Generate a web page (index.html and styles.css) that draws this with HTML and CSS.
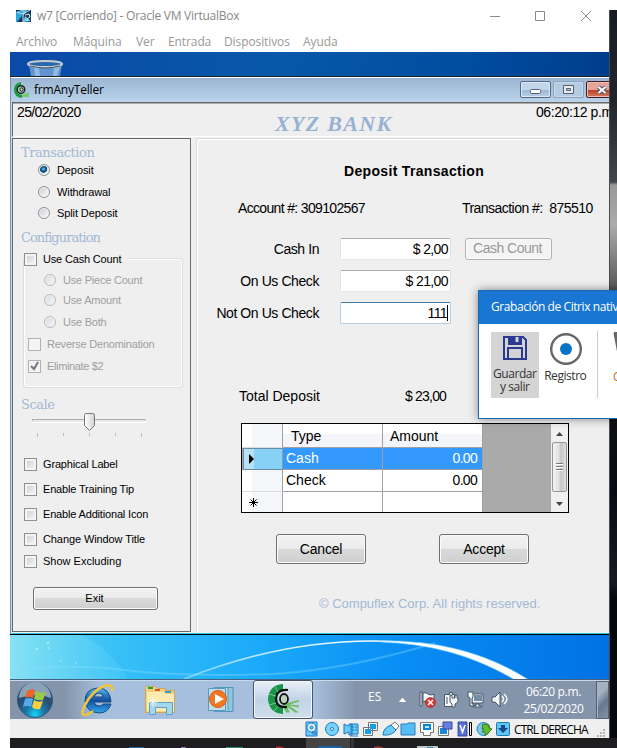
FILE: index.html
```html
<!DOCTYPE html>
<html lang="es">
<head>
<meta charset="utf-8">
<title>w7 [Corriendo] - Oracle VM VirtualBox</title>
<link rel="stylesheet" href="styles.css">
</head>
<body>
<div class="host">
  <div class="main">
    <div class="vm">
      <header class="vm-title">
        <svg width="16" height="14" viewBox="0 0 16 14"><path fill="#163a55" d="M0 1h15v12H0z"/><path fill="#2aa4df" d="M0 3l5-2 1 6-5 6H0z"/><path fill="#68c3ee" d="M4 1h7L8 6zM7 13l2-6 6 5z"/><path stroke="#d3edf8" fill="none" d="M1 3l6 2v8M7 5l7-4M9 6l4-1 1 3-3 2v2"/></svg>
        <span class="vm-name">w7 [Corriendo] - Oracle VM VirtualBox</span>
        <svg class="vm-controls" width="104" height="12" viewBox="0 0 104 12" fill="none" stroke="#8c8c8c"><path d="M0 6.500h10M45.500 1.500h9v9h-9zM91 1l10 10M101 1L91 11"/></svg>
      </header>
      <nav class="vm-menu"><span class="m1">Archivo</span><span class="m2">Máquina</span><span class="m3">Ver</span><span class="m4">Entrada</span><span class="m5">Dispositivos</span><span class="m6">Ayuda</span></nav>
      <div class="wall-top">
        <svg width="40" height="16" viewBox="0 0 40 16"><path fill="#5f94cf" d="M2 4h33l-2 12H4z"/><path fill="#91b9e2" d="M7 6h5l1 10H8zM27 7h6l-3 9h-4z"/><ellipse cx="18" cy="4" rx="17" ry="3" fill="#2769ae" stroke="#c9cdd0" stroke-width="2"/><path d="M3 6q15 4 30 0" stroke="#444e59" fill="none"/></svg>
      </div>
      <section class="app">
        <div class="app-title">
          <svg width="17" height="16" viewBox="0 0 17 16"><path fill="#1c9a48" d="M8 0v3Q4 4 4 8t5 5v3Q1 15 1 8t7-8z"/><path fill="#79c76f" d="M9 13l7-3v5H9z"/><circle cx="8" cy="7.500" r="3.800" fill="#b9d1b7" stroke="#17251d" stroke-width="1.400"/><circle cx="8.500" cy="7.500" r="1.700" fill="none" stroke="#17251d"/></svg>
          <span class="app-name">frmAnyTeller</span>
          <span class="cap cap-min"><svg width="12" height="5"><rect x=".5" y=".5" width="10" height="4" rx="1" fill="#fff" stroke="#536075"/></svg></span>
          <span class="cap cap-max"><svg width="12" height="9"><path fill="#e6ebed" stroke="#536075" fill-rule="evenodd" d="M.5.5h10v8H.5zM3.500 3.500h4v2h-4z"/></svg></span>
          <span class="cap cap-close"><svg width="12" height="10" viewBox="0 0 12 10"><path d="M2.500 2l7 6M9.500 2l-7 6" stroke="#3f4e68" stroke-width="4"/><path d="M2.500 2l7 6M9.500 2l-7 6" stroke="#fff" stroke-width="2.200"/></svg></span>
        </div>
        <div class="banner"><span class="date">25/02/2020</span><b>XYZ BANK</b><span class="time">06:20:12 p.m</span></div>
        <div class="app-body">
          <aside>
            <h2 class="s-tr">Transaction</h2>
            <label class="opt dep"><i class="radio on"></i><span>Deposit</span></label>
            <label class="opt wit"><i class="radio"></i><span>Withdrawal</span></label>
            <label class="opt spl"><i class="radio"></i><span>Split Deposit</span></label>
            <h2 class="s-co">Configuration</h2>
            <div class="group">
              <label class="legend"><i class="check"></i><span>Use Cash Count</span></label>
              <label class="sub g1"><i class="radio"></i><span>Use Piece Count</span></label>
              <label class="sub g2"><i class="radio"></i><span>Use Amount</span></label>
              <label class="sub g3"><i class="radio"></i><span>Use Both</span></label>
              <label class="sub g4"><i class="check"></i><span>Reverse Denomination</span></label>
              <label class="sub g5"><i class="check"><svg width="11" height="11"><path d="M2 5l3 3 4-7" fill="none" stroke="#777" stroke-width="2"/></svg></i><span>Eliminate $2</span></label>
            </div>
            <h2 class="s-sc">Scale</h2>
            <svg class="slider" width="120" height="28" viewBox="0 0 120 28"><path fill="#a9b1ac" d="M1 8h114v2H1z"/><path fill="#e7eae7" d="M2 9h113v2H2z"/><path fill="#fff" d="M1 11h115v1H1z"/><path stroke="#bcbcbc" d="M6.500 22v4M32.500 22v3M58.500 22v3M84.500 22v3M110.500 22v4"/><path fill="url(#thumb)" stroke="#777" d="M54.500 2.500h7q2 0 2 2v10l-5 5-5-5v-10q0-2 1-2z"/><defs><linearGradient id="thumb"><stop stop-color="#fff"/><stop offset="1" stop-color="#d2d2d2"/></linearGradient></defs></svg>
            <label class="ck k1"><i class="check"></i><span>Graphical Label</span></label>
            <label class="ck k2"><i class="check"></i><span>Enable Training Tip</span></label>
            <label class="ck k3"><i class="check"></i><span>Enable Additional Icon</span></label>
            <label class="ck k4"><i class="check"></i><span>Change Window Title</span></label>
            <label class="ck k5"><i class="check"></i><span>Show Excluding</span></label>
            <button class="exit">Exit</button>
          </aside>
          <main>
            <h1>Deposit Transaction</h1>
            <div class="ids"><span class="acc">Account #: 309102567</span><span class="trn">Transaction #: &nbsp;875510</span></div>
            <div class="field"><span class="lab l1">Cash In</span><span class="box">$ 2,00</span><button class="count" disabled>Cash Count</button></div>
            <div class="field"><span class="lab l2">On Us Check</span><span class="box">$ 21,00</span></div>
            <div class="field"><span class="lab l3">Not On Us Check</span><span class="box focus">111<i class="caret"></i></span></div>
            <div class="total"><span>Total Deposit</span><span class="sum">$ 23,00</span></div>
            <div class="table">
              <div class="cells">
                <span class="rh head"></span><span class="th ty">Type</span><span class="th am">Amount</span>
                <span class="rh cur"><svg width="5" height="10"><path d="M0 0l5 5-5 5z"/></svg></span><span class="td sel">Cash</span><span class="td num sel">0.00</span>
                <span class="rh"></span><span class="td">Check</span><span class="td num">0.00</span>
                <span class="rh new"><svg width="9" height="9" stroke="#000" fill="none"><path d="M4.500 0v9M0 4.500h9M1.500 1.500l6 6M7.500 1.500l-6 6"/></svg></span><span class="td"></span><span class="td"></span>
              </div>
              <div class="scroll"><svg width="7" height="4"><path d="M0 4l3.500-4L7 4z" fill="#444"/></svg><div class="thumb"><i></i><i></i><i></i></div><svg width="7" height="4"><path d="M0 0h7L3.500 4z" fill="#444"/></svg></div>
            </div>
            <div class="actions"><button>Cancel</button><button>Accept</button></div>
            <p class="copy">© Compuflex Corp. All rights reserved.</p>
          </main>
        </div>
      </section>
      <svg class="wall" width="599" height="44" viewBox="0 0 599 44">
        <defs><linearGradient id="sky"><stop stop-color="#6bd5f3"/><stop offset=".18" stop-color="#37c0f6"/><stop offset=".42" stop-color="#1ba9fa"/><stop offset=".65" stop-color="#098ef5"/><stop offset="1" stop-color="#0071e4"/></linearGradient><linearGradient id="leaf"><stop stop-color="#9aeaf2" stop-opacity=".6"/><stop offset="1" stop-color="#4bcaf8" stop-opacity=".45"/></linearGradient><linearGradient id="arc"><stop stop-color="#bff0ff" stop-opacity=".5"/><stop offset=".5" stop-color="#d7f4ff"/><stop offset="1" stop-color="#fff"/></linearGradient></defs>
        <path fill="url(#sky)" d="M0 0h599v44H0z"/><path fill="url(#leaf)" d="M0 0h72q30 16 46 44H0z"/>
        <path d="M0 36q55-8 115-1t150 4q75-5 160-31" fill="none" stroke="#8ce0ff" stroke-opacity=".35" stroke-width="2"/>
        <path d="M174 44Q285 0 391 7" fill="none" stroke="url(#arc)" stroke-width="1.600"/><path d="M370 6Q455 4 519 45h-14Q445 9 370 7z" fill="#fff" stroke="#7fd3ff" stroke-opacity=".6"/>
        <g fill="#bff5fa"><circle cx="27" cy="14" r="1"/><circle cx="38" cy="8" r="1"/><circle cx="39" cy="13" r=".8"/><circle cx="51" cy="26" r=".7"/><circle cx="66" cy="28" r=".7"/></g>
      </svg>
      <div class="taskbar">
        <svg class="orb" width="38" height="38" viewBox="0 0 38 38"><defs><radialGradient id="orb" cy=".9"><stop stop-color="#18d5f4"/><stop offset=".5" stop-color="#157cad"/><stop offset="1" stop-color="#2b4e74"/></radialGradient></defs><circle cx="19" cy="19" r="17.500" fill="url(#orb)" stroke="#315778"/><path d="M3 17a16 16 0 0132 0q-14-6-32 0z" fill="#c9dae5" opacity=".6"/><path fill="#ef642b" d="M11 10q4-3 8-1l-2 8q-4-2-8 0z"/><path fill="#99c946" d="M20 10q5 3 10 1l-3 8q-4 1-9-1z"/><path fill="#55a9e8" d="M9 18q4-2 8 0l-2 8q-4-2-8 0z"/><path fill="#fbcf3d" d="M18 19q4 3 9 1l-3 8q-5 1-8-2z"/></svg>
        <svg class="ie" width="34" height="34" viewBox="0 0 34 34"><defs><linearGradient id="ie" x2="0" y2="1"><stop stop-color="#55b9ee"/><stop offset=".5" stop-color="#154f9e"/><stop offset="1" stop-color="#31a6ed"/></linearGradient></defs><path fill="url(#ie)" stroke="#154780" fill-rule="evenodd" d="M17 5q12 0 13 14H13q1 4 5 4 3 0 4-2h8q-3 9-12 9Q5 29 4 18 4 6 17 5zm-4 9h9q0-4-4-4t-5 4z"/><path fill="none" stroke="#f2c43c" stroke-width="2.500" d="M31 8q2-8-8-5Q11 8 4 22-1 32 4 32q3 0 8-4"/></svg>
        <svg class="folder" width="34" height="32" viewBox="0 0 34 32"><path fill="#f3d27e" stroke="#cba85b" d="M2.500 2.500h10l2 2h8v2h9v22h-29z"/><path fill="#fcebb0" d="M4 8h17l2 2h8v17H4z"/><path fill="#25a342" d="M5 3h5v2H5z"/><path fill="#d95435" d="M12 5h5v2h-5z"/><path fill="#3a9bd5" d="M22 7h6v2h-6z"/><path d="M6.500 30.500v-12h23v12h-6v-7h-11v7z" fill="#a2d7ed" stroke="#5da1c9"/><path d="M10 13v10M5 18h10M7 15l6 6M13 15l-6 6" stroke="#fff" stroke-width=".8"/></svg>
        <svg class="wmp" width="31" height="28" viewBox="0 0 31 28"><path d="M11 1.500h15v24h-9z" fill="#8fc7df" stroke="#4e91b9"/><path d="M7 1.500h14v24H7z" fill="#afd9e8" stroke="#5799ba"/><path d="M1.500 2.500h17v22h-17z" fill="#c2dce8" stroke="#5799ba"/><circle cx="11" cy="13" r="8.500" fill="#f4771f" stroke="#dc6017"/><path fill="#fff" d="M8 8l9 5-9 5z"/></svg>
        <div class="active"><svg width="34" height="32" viewBox="0 0 34 32"><path fill="#189548" d="M16 1v7q-6 2-6 8 0 6 6 8v7Q2 30 1 16 2 2 16 1z"/><path fill="#6dbe62" d="M20 20l12-3v1.500l-9 3 9 1v2l-10-2 10 7h-4l-8-6 3 6h-4l-3-6z"/><path d="M21 7q-12-1-12 9 0 9 11 8" fill="none" stroke="#111" stroke-width="2.200"/><ellipse cx="17" cy="16" rx="4" ry="5" fill="#bad3bd" stroke="#111" stroke-width="1.800"/><path d="M2 11l7 2M2 22l7-2M7 28l4-5M8 4l3 5" stroke="#79c68a"/></svg></div>
        <span class="lang">ES</span>
        <svg class="up" width="9" height="6"><path d="M0 5.500L4.500 0 9 5.500z" fill="#fff" stroke="#5b687b" stroke-width=".5"/></svg>
        <svg class="tray" width="89" height="18" viewBox="0 0 89 18"><g fill="#f6f8fa" stroke="#455468"><path d="M1 1h2v14H1zM4 2q3-1 5 1t6 0v8q-4 2-6 0T4 11z"/><path d="M25.500 3.500h5v-2h3v2h2v12h-10z"/><path fill="none" d="M28 6v7"/><path d="M31 4h2v3h3V4h2v3h1v4l-3 2v3h-3v-3l-2-2z"/><path d="M53 3h11v9H53z"/><path d="M49 1h5v5l-1 1v6h2v2h-4V7l-2-1zM57 13h3v2h3v1h-9v-1h3z"/><path d="M73 6h3l5-5v15l-5-5h-3z"/></g><path fill="#738da5" d="M55 4h8v6h-8z"/><path d="M83 5q3 3 0 6M85 3q6 5 0 10" fill="none" stroke="#fff" stroke-width="1.300"/><circle cx="11.500" cy="11.500" r="4.800" fill="#e33a32" stroke="#b9211d"/><path d="M9 9l5 5M14 9l-5 5" stroke="#fff" stroke-width="1.500"/></svg>
        <div class="clock"><span class="c1">06:20 p.m.</span><span class="c2">25/02/2020</span></div>
        <div class="peek"></div>
      </div>
      <div class="status">
        <svg width="206" height="16" viewBox="0 0 206 16"><g fill="#67cbfb" stroke="#2377bd"><path d="M1 1h11v14H1z"/><circle cx="6.500" cy="6.500" r="4.500" fill="#d8f3ff"/><circle cx="6.500" cy="6.500" r="1.500"/><path d="M7 11h4v2H8z"/><circle cx="27" cy="8" r="6.500" fill="#79d4fc"/><circle cx="27" cy="8" r="1.500" fill="#fff"/><path d="M39 3l4 2h1V3h3v11h-3v-3l-5 2zM46 3h7v10h-7z"/><path d="M48 5v2M51 5v2M48 8v2M51 8v2M45 15h8"/></g><g stroke="#767676" fill="#fff"><path d="M63.500 1.500h9v8h-9zM58.500 6.500h9v8h-9z"/></g><path fill="#159fe8" d="M65 3h6v5h-6zM60 8h6v5h-6z"/><path fill="#fff" stroke="#777" d="M86 4l4-3 4 4-3 4z"/><path fill="#69c9f7" stroke="#217bb9" d="M78 14q0-7 8-10l5 5q-4 6-13 5z"/><path fill="#55bdf5" stroke="#287cb7" d="M96 3h6l1-1h7v12H96z"/><path stroke="#777" fill="#fff" d="M115.500 1.500h13v10h-3v3h-7v-3h-3z"/><path fill="#b7e9ff" stroke="#0685d9" stroke-width="2" d="M119 4h6v4h-6z"/><path stroke="#777" fill="#fff" d="M133.500 5.500h10v9h-10z"/><path fill="#1589dd" d="M135 7h7v6h-7z"/><path fill="#6480dc" stroke="#3846a4" d="M138 1h9v7h-9z"/><path fill="#566fd0" stroke="#32479e" d="M153 1h9v14h-9z"/><path stroke="#aab6ee" stroke-dasharray="1 1" d="M152.500 1v14M162.500 1v14"/><path d="M155 4l2.500 7L160 4" fill="none" stroke="#fff" stroke-width="1.600"/><path fill="#fff" stroke="#000" d="M164.500 1.500h2v13h-2z"/><circle cx="178.500" cy="8" r="6.500" fill="#79c9ee" stroke="#2583ba"/><path d="M178 3l6 1v3l3 1-7 7v-4h-3l2-3h-2z" fill="#61bd29" stroke="#347d21"/><rect x="191.500" y="1.500" width="13" height="13" rx="1" fill="#65c4f5" stroke="#197caf"/><path d="M196 4h4v3h3l-5 5-5-5h3z" fill="#124d87"/></svg>
        <span class="key">CTRL DERECHA</span>
        <svg class="grip" width="9" height="9" fill="#b4b4b4"><path d="M6 0h2v2H6zM6 3h2v2H6zM3 3h2v2H3zM6 6h2v2H6zM3 6h2v2H3zM0 6h2v2H0z"/></svg>
      </div>
    </div>
    <div class="desk"></div>
  </div>
  <svg class="hostbar" width="607" height="10" viewBox="0 0 607 10"><path fill="#1e1e20" d="M0 0h607v10H0z"/><path fill="#444445" d="M296 0h44v10h-44z"/><path fill="#343435" d="M341 0h3v10h-3z"/><path fill="#1864a7" d="M119 9h15v1h-15zM308 8h24v2h-24z"/><path fill="#8d77bd" d="M171 9h5v1h-5z"/><path fill="#2f8865" d="M216 9h17v1h-17z"/><path fill="#bc2632" d="M266 9q5-2 8 1h-8z"/><path fill="#a33d36" d="M364 9q5-2 10 1h-10z"/><path fill="#b9c3c9" d="M407 8h21v2h-21z"/><path fill="#3687a8" d="M417 9h6v1h-6z"/></svg>
  <div class="popup">
    <div class="pop-title">Grabación de Citrix nativa</div>
    <div class="pop-body">
      <div class="tool save"><svg width="24" height="24" viewBox="0 0 24 24" fill="none" stroke="#2b3990" stroke-width="2"><path d="M1 1h19l3 3v19H1zM5 23V12h14v11"/><path d="M6 1v7h12V1" fill="#2b3990"/><path d="M14 1v5" stroke="#d4d4d4" stroke-width="3"/></svg><span class="t1">Guardar</span><span class="t2">y salir</span></div>
      <div class="tool rec"><svg width="32" height="32"><circle cx="16" cy="16" r="14.800" fill="#fff" stroke="#666" stroke-width="2.400"/><circle cx="16" cy="16" r="6" fill="#0873c4"/></svg><span class="t3">Registro</span></div>
      <div class="sep"></div>
      <div class="next"><svg width="14" height="25"><path d="M1 1h13M2 1l4 21h8" fill="none" stroke="#666" stroke-width="3"/></svg><span>C</span></div>
    </div>
  </div>
</div>
</body>
</html>
```
FILE: styles.css
```css
*{box-sizing:border-box}
body{margin:0;background:#fff;overflow:hidden}
svg{display:block;flex:none}
h1,h2,p{margin:0;font-weight:normal}
.host{position:relative;width:617px;height:748px;overflow:hidden;padding-left:10px;font-family:"Liberation Sans",Arial,sans-serif}
.main{display:flex;height:738px}
.vm{width:599px;flex:none;display:flex;flex-direction:column}
.desk{flex:1;margin-top:10px;border-left:1px solid #4a4a4c;background:linear-gradient(#171b24 0,#22252c 90px,#44464c 172px,#999 175px,#aaa 215px,#777 255px,#555 280px,#111 400px,#080b14 480px,#171a24 570px,#05070f 590px,#060810)}
.hostbar{height:10px}
.vm-title,.vm-menu{font-family:"Open Sans",sans-serif;font-size:12px;color:#999;white-space:nowrap}
.vm-title{height:31px;display:flex;align-items:center;padding-left:6px;color:#888}
.vm-name{margin-left:5px;width:202px;letter-spacing:-.26px}
.vm-controls{margin-left:251px}
.vm-menu{height:21px;display:flex;padding-left:6px;line-height:22px;letter-spacing:-.1px}
.m1{width:57px}.m2{width:63px}.m3{width:32px}.m4{width:56px}.m5{width:79px}
.wall-top{height:24px;background:linear-gradient(100deg,#0b4aa8,#0758a9 45%,#004da0 75%,#003d8c);overflow:hidden;padding:8px 0 0 17px}
.app{height:559px;background:#efefef;border-top:1px solid #20252c;border-bottom:1px solid #000;padding-left:2px;overflow:hidden;box-shadow:inset 1px 0 #7994ad,inset 2px 0 #c6d8eb,inset 0 -1px #2bc8e3}
.app-title{height:25px;margin-left:-1px;border-top:1px solid #fff;background:linear-gradient(#9bb6d3,#bad2ea);display:flex;align-items:center;padding:0 0 1px 2px;overflow:hidden}
.app-name{font:12px "Open Sans",sans-serif;letter-spacing:-.2px;margin-left:4px;width:486px;flex:none}
.cap{flex:none;height:17px;border:1px solid #526a87;border-radius:2px;box-shadow:inset 0 0 0 1px #dce8f4;background:linear-gradient(#c3d5e8 50%,#9cb5d0 50%,#b8d0e8);display:flex;align-items:center;justify-content:center}
.cap-min{width:31px;margin-right:2px;padding-top:3px}.cap-max{width:31px;margin-right:2px;border-color:#8ba5c1;background:#b4cbe2;box-shadow:inset 0 0 0 1px #c7daed}.cap-close{width:31px;border-color:#451a22;background:linear-gradient(#e4a49a 50%,#b63924 50%,#d77d60);box-shadow:inset 0 0 0 1px #ecc0b7}
.banner{height:35px;border:solid #696969;border-width:1px 0 0 1px;border-bottom:1px solid #fff;box-shadow:inset 0 1px #aaa;display:flex;font-size:14px;white-space:nowrap;padding-left:4px;line-height:18px}
.date{width:258px;letter-spacing:-.65px;flex:none}
.banner b{font:italic bold 22px/41px "Liberation Serif",serif;color:#97b2d2;width:261px;letter-spacing:1.3px;flex:none}
.banner b,.time{position:relative}
.date{width:258px}
.time{letter-spacing:-.42px;flex:none}
.app-body{display:flex;height:495px;padding-top:1px}
aside{width:179px;height:494px;border:1px solid #696969;display:flex;flex-direction:column;align-items:flex-start;font-size:11px;line-height:14px;white-space:nowrap;margin-right:5px;flex:none;letter-spacing:-.17px}
h2{font:13px/15px "DejaVu Serif",serif;color:#a2b9d4;height:14px;margin-left:8px;letter-spacing:-.45px}
.s-tr{margin-top:6px}
label{display:flex;height:14px;align-items:center;flex:none}
.radio{width:12px;height:12px;border:1px solid #8e8f8f;border-radius:50%;box-shadow:inset 0 0 0 1px #f7f7f7;background:linear-gradient(135deg,#c4c9cf,#fff);flex:none}
.radio.on{background:radial-gradient(circle at 45% 40%,#8cdff5 0,#1877a7 20%,#0c3f66 42%,#e4edf3 50%)}
.check{width:13px;height:13px;border:1px solid #8e8f8f;box-shadow:inset 0 0 0 2px #f4f4f4;background:linear-gradient(135deg,#c9ccd2,#f8f8f8);flex:none}
.opt{margin-left:25px;letter-spacing:-.1px}.opt span{margin-left:7px}
.dep{margin-top:4px}.wit{margin-top:8px}.spl{margin-top:7px}
.s-co{margin-top:10px;letter-spacing:-.95px}
.group{margin:14px 0 0 10px;width:160px;height:130px;border:1px solid #d5dfe5;border-radius:3px;box-shadow:inset 0 0 0 1px #fff}
.legend{margin:-7px 0 0 0;width:105px;background:#efefef;position:relative}
.legend span,.ck span{margin-left:6px}
.sub{color:#a0a0a0;margin-left:20px;letter-spacing:-.22px}.sub span{margin-left:7px}
.sub .radio{opacity:.55}.sub .check{background:#f4f4f4;border-color:#b2b2b2}
.g1{margin-top:7px}.g2{margin-top:6px}.g3{margin-top:8px}.g4{margin:8px 0 0 4px}.g5{margin:8px 0 0 4px;letter-spacing:-.35px}.g4 span,.g5 span{margin-left:6px}
.s-sc{margin-top:9px}
.slider{margin-left:18px}
.ck{margin-left:11px}.k1{margin-top:18px}.k2,.k3,.k4{margin-top:11px}.k4{letter-spacing:-.1px}.k5{margin-top:8px;letter-spacing:0}
button{font:14px "Liberation Sans",sans-serif;color:#000;padding:0;border:1px solid #707070;border-radius:3px;background:linear-gradient(#f2f2f2 0,#ebebeb 48%,#dadada 50%,#cfcfcf);box-shadow:inset 0 0 0 1px #fbfbfb}
.exit{width:125px;height:23px;font-size:11px;margin:19px 0 0 20px;padding:0 2px 2px 0}
main{flex:1;height:494px;border:1px solid #d5dfe5;border-right:0;border-bottom:0;border-radius:3px 0 0;box-shadow:inset 1px 1px #fff;font-size:14px;line-height:16px;white-space:nowrap;min-width:0}
h1{font:bold 14px/16px "Liberation Sans",sans-serif;margin:24px 0 0 147px;letter-spacing:.33px}
.ids{display:flex;margin:21px 0 0 41px}
.acc{width:224px;letter-spacing:-.66px}.trn{letter-spacing:-.54px}
.field{display:flex;height:22px;margin-bottom:10px;align-items:center}
.ids+.field{margin-top:22px}
.lab{width:143px;padding-right:21px;text-align:right;letter-spacing:-.42px}
.box{width:111px;height:22px;background:#fff;border:1px solid #e2e3ea;border-top-color:#abadb3;border-radius:2px;display:flex;justify-content:flex-end;align-items:center;padding-right:2px;letter-spacing:-.6px}
.focus{border-color:#b5cfe7;border-top-color:#3d7bad}
.caret{width:1px;height:16px;background:#000}
.count{width:87px;height:22px;margin-left:14px;color:#999;border-color:#adb2b5;background:#f4f4f4;letter-spacing:-.5px;padding:0 2px 2px 0}
.total{display:flex;margin:64px 0 0 42px}.total span:first-child{width:166px}.sum{letter-spacing:-.8px}
.table{width:328px;height:90px;margin:19px 0 0 44px;border:1px solid #000;background:#aaa;display:flex;overflow:hidden}
.cells{width:241px;height:88px;display:grid;grid-template-columns:41px 100px 100px;grid-template-rows:24px 22px 22px 21px;line-height:21px;font-size:14px;flex:none}
.cells>span{border-right:1px solid #a0a0a0;border-bottom:1px solid #a0a0a0}
.cells .rh{background:linear-gradient(90deg,#fff 10px,#f4f6f9 10px);border-bottom-color:#ddd;display:flex;align-items:center;padding-left:7px}
.cells .cur{background:linear-gradient(90deg,#b9e1f6 10px,#86d1f5 10px);border:1px solid #668ba6;border-right-color:#999;padding-left:5px;margin-left:1px}
.cells .th{background:linear-gradient(#fff 42%,#f3f5f8 42%);line-height:25px;padding-left:8px}.cells .am{padding-left:7px}
.td{background:#fff;padding-left:3px}.td.num{text-align:right;padding-right:5px;letter-spacing:-.7px}.td.sel{background:#3399ff;color:#fff}
.scroll{margin-left:auto;width:17px;background:#f0f0f0;display:flex;flex-direction:column;align-items:center;padding:8px 0 6px}
.scroll svg{flex:none}
.thumb{width:15px;height:50px;border:1px solid #979797;border-radius:2px;background:linear-gradient(90deg,#f3f3f3,#e2e2e2 45%,#c6c6c6 60%,#ddd);margin:6px 0 10px;display:flex;flex-direction:column;align-items:center;justify-content:center;gap:1px}
.thumb i{width:7px;height:2px;background:#777;border-bottom:1px solid #fff}
.actions{display:flex;gap:73px;margin:21px 0 0 79px}.actions button{width:90px;height:30px;letter-spacing:-.2px}
.copy{font-size:13px;color:#a2b9d4;margin:32px 0 0 122px}
.wall{height:44px}
.taskbar{height:40px;border-top:1px solid #44617f;box-shadow:inset 0 1px #c7d9eb;background:linear-gradient(90deg,#8495ab 0 55px,#a6bfdc 90px 305px,#8495ab 345px);display:flex;align-items:center;flex:none}
.orb{margin-left:6px}.ie{margin-left:27px}.folder{margin-left:28px}.wmp{margin-left:30px}
.active{width:60px;height:39px;border:1px solid #46566a;border-radius:3px;background:linear-gradient(#e9f0f7,#c1d3e6 50%,#d0deeb);box-shadow:inset 0 0 0 1px #f4f8fc;margin-left:15px;padding:2px 0 0 13px;flex:none}
.lang{font:12px "Open Sans",sans-serif;color:#fff;width:14px;margin:-6px 0 0 55px}.up{margin-left:16px}
.tray{margin-left:12px}
.clock{font:12px/17px "Open Sans",sans-serif;color:#fff;width:65px;display:flex;flex-direction:column;align-items:center;margin-left:13px;letter-spacing:-.35px;white-space:nowrap;flex:none}
.peek{width:13px;height:38px;margin-left:auto;border:1px solid #536175;background:linear-gradient(135deg,#a4b2c1 30%,#69798d 60%,#8293a5);box-shadow:inset 1px 0 #a8b7c7;flex:none}
.status{height:19px;background:#efefef;display:flex;align-items:center;padding-left:295px;flex:none}
.key{font:12px "Open Sans",sans-serif;margin-left:3px;letter-spacing:-.9px;white-space:nowrap;padding-top:2px}.grip{margin:9px 3px 0 auto}
.popup{position:absolute;left:478px;top:290px;width:150px;height:129px;border:1px solid #1668b8;background:#fff;box-shadow:0 0 9px rgba(0,0,0,.45);font:12px "Open Sans",sans-serif;color:#333;white-space:nowrap}
.pop-title{height:33px;background:#1976d2;color:#fff;line-height:32px;padding-left:12px;letter-spacing:-.42px}
.pop-body{display:flex;padding:8px 0 0 12px}
.tool{display:flex;flex-direction:column;align-items:center;line-height:13px;letter-spacing:-.45px}
.save{width:48px;height:66px;background:#d4d4d4;padding-top:4px}.save svg{margin-bottom:7px}
.rec{width:54px;padding-top:1px}.rec svg{margin:0 0 3px 1px}.t3{line-height:16px}
.sep{width:1px;height:67px;background:#ccc;margin-left:5px;margin-top:-1px}
.next{padding:0 0 0 15px}.next span{display:block;color:#cc6a1d;margin-top:11px}
```
